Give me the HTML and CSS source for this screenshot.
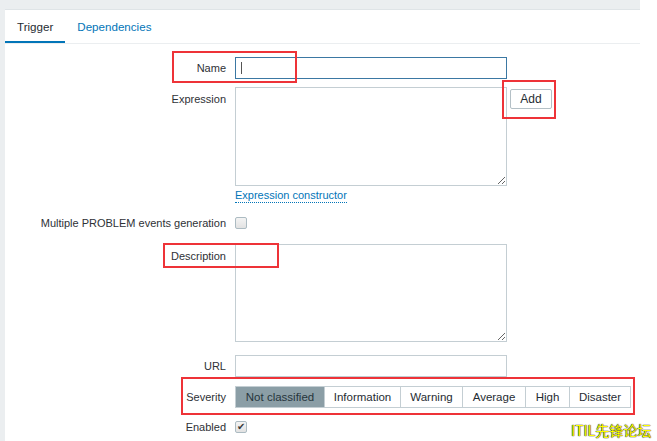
FILE: index.html
```html
<!DOCTYPE html>
<html>
<head>
<meta charset="utf-8">
<link rel="stylesheet" href="styles.css">
</head>
<body>
<div class="page">
  <div class="panel">
    <div class="tabs">
      <span class="tab active">Trigger</span>
      <span class="tab">Dependencies</span>
    </div>
    <div class="form">
      <div class="row row-name">
        <label class="label">Name</label>
        <div class="field"><input class="text focus" type="text"><span class="caret"></span></div>
      </div>
      <div class="row row-expr">
        <label class="label top">Expression</label>
        <div class="field flex"><textarea class="area"></textarea><button class="btn">Add</button></div>
      </div>
      <div class="row row-link">
        <span class="label"></span>
        <div class="field"><span class="link">Expression constructor</span></div>
      </div>
      <div class="row row-check">
        <label class="label">Multiple PROBLEM events generation</label>
        <div class="field"><span class="check"></span></div>
      </div>
      <div class="row row-desc">
        <label class="label top">Description</label>
        <div class="field"><textarea class="area area2"></textarea></div>
      </div>
      <div class="row row-url">
        <label class="label">URL</label>
        <div class="field"><input class="text" type="text"></div>
      </div>
      <div class="row row-sev">
        <label class="label">Severity</label>
        <div class="field">
          <div class="seg">
            <span class="s s1 on">Not classified</span><span class="s s2">Information</span><span class="s s3">Warning</span><span class="s s4">Average</span><span class="s s5">High</span><span class="s s6">Disaster</span>
          </div>
        </div>
      </div>
      <div class="row row-en">
        <label class="label">Enabled</label>
        <div class="field"><span class="check checked">&#10004;</span></div>
      </div>
    </div>
  </div>
</div>
<div class="mark m1"></div>
<div class="mark m2"></div>
<div class="mark m3"></div>
<div class="mark m4"></div>
<div class="wm">ITIL先锋论坛</div>
</body>
</html>
```
FILE: styles.css
```css
html, body { margin: 0; padding: 0; background: #fff; }
body {
  font-family: "Liberation Sans", Arial, sans-serif;
  font-size: 11px;
  color: #1f2c33;
  width: 657px;
  height: 441px;
  overflow: hidden;
  position: relative;
}
.page {
  width: 640px;
  height: 441px;
  background: #ebeef0;
  padding: 9px 0 0 5px;
  box-sizing: border-box;
}
.panel {
  background: #fff;
  height: 100%;
  border-top: 1px solid #dfe4e7;
}
.tabs {
  display: flex;
  height: 33px;
  border-bottom: 1px solid #ebeef0;
}
.tab {
  padding: 3px 12px 0;
  font-size: 11.6px;
  line-height: 28px;
  color: #0275b8;
  border-bottom: 2px solid transparent;
}
.tab.active {
  color: #1f2c33;
  border-bottom-color: #0275b8;
}
.form { padding-top: 13px; display: flex; flex-direction: column; }
.row { display: flex; align-items: center; }
.label {
  width: 230px;
  box-sizing: border-box;
  padding-right: 9px;
  text-align: right;
  flex: none;
  line-height: 14px;
  color: #2e3136;
}
.label.top { align-self: flex-start; padding-top: 5px; }
.field { position: relative; }
.flex { display: flex; align-items: flex-start; }
.text {
  width: 272px;
  height: 22px;
  box-sizing: border-box;
  border: 1px solid #c4ced3;
  margin: 0;
  padding: 0 5px;
  font: inherit;
  outline: none;
  display: block;
}
.text.focus { border-color: #3b78a3; }
.caret {
  position: absolute;
  left: 6px;
  top: 5px;
  width: 1px;
  height: 12px;
  background: #555;
}
.area {
  width: 272px;
  height: 99px;
  box-sizing: border-box;
  border: 1px solid #c4ced3;
  margin: 0;
  padding: 4px;
  font: inherit;
  display: block;
  resize: both;
  outline: none;
}
.area2 { height: 98px; }
.btn {
  margin: 2px 0 0 3px;
  width: 42px;
  height: 20px;
  padding: 0;
  border: 1px solid #b4c0c6;
  border-radius: 2px;
  background: #fff;
  font: inherit;
  font-size: 12px;
  color: #1f2c33;
}
.row-name { margin-bottom: 8px; }
.row-expr { margin-bottom: 2px; }
.row-link { height: 16px; margin-bottom: 10px; }
.link {
  color: #0275b8;
  border-bottom: 1px dotted #0275b8;
  line-height: 13px;
  display: inline-block;
}
.row-check { height: 18px; margin-bottom: 12px; }
.check {
  display: block;
  width: 10px;
  height: 10px;
  border: 1px solid #acbbc2;
  border-radius: 2px;
  background: linear-gradient(#f4f4f4, #e2e2e2);
  font-size: 10px;
  line-height: 10px;
  text-align: center;
  color: #3a3a3a;
}
.row-desc { margin-bottom: 13px; }
.row-url { margin-bottom: 9px; }
.row-sev { margin-bottom: 10px; }
.seg { display: flex; height: 22px; border: 1px solid #c4ced3; box-sizing: border-box; width: 396px; }
.s {
  line-height: 20px;
  text-align: center;
  border-left: 1px solid #c4ced3;
  box-sizing: border-box;
  font-size: 11.5px;
}
.s1 { width: 88px; border-left: none; }
.s2 { width: 76px; }
.s3 { width: 62px; }
.s4 { width: 63px; }
.s5 { width: 44px; }
.s6 { width: 61px; }
.s.on { background: #8b9ea6; color: #26353c; }
.row-en { height: 18px; }
.mark {
  position: absolute;
  border: 2px solid #ee3338;
  box-sizing: border-box;
}
.m1 { left: 172px; top: 51px; width: 125px; height: 32px; }
.m2 { left: 502px; top: 80px; width: 54px; height: 39px; }
.m3 { left: 163px; top: 243px; width: 116px; height: 25px; }
.m4 { left: 181px; top: 377px; width: 454px; height: 38px; }
.wm {
  position: absolute;
  left: 571px;
  top: 421px;
  font-family: "Noto Sans CJK SC", sans-serif;
  font-size: 14px;
  line-height: 18px;
  color: #ffff00;
  text-shadow: 0 0 1px #000, 0 0 1px #000;
}
```
